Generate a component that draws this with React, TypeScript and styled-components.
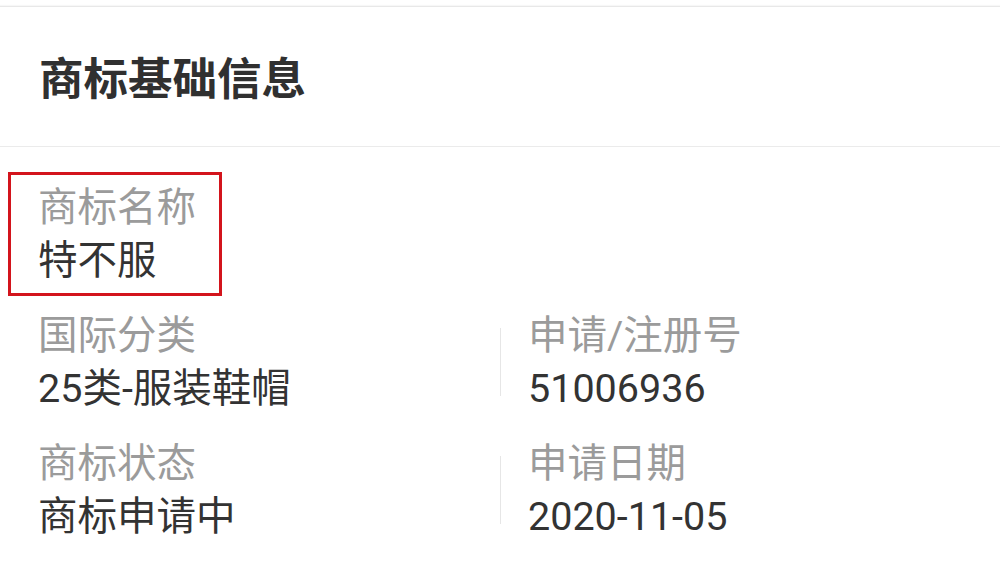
import React from "react";
import styled, { createGlobalStyle } from "styled-components";

const Global = createGlobalStyle`
  html, body { margin: 0; padding: 0; background: #ffffff; }
  body { font-family: Roboto, "Noto Sans CJK SC", sans-serif; }
`;

const Page = styled.div`
  width: 1000px;
  height: 571px;
  overflow: hidden;
  background: #ffffff;
  padding-top: 6px;
  box-sizing: border-box;
`;

const Card = styled.section`
  border-top: 1px solid #e8e8e8;
  box-shadow: 0 -1px 1px rgba(0, 0, 0, 0.03);
`;

const Header = styled.header`
  height: 139px;
  display: flex;
  align-items: center;
  padding-left: 39px;
  border-bottom: 1px solid #ebebeb;
`;

const Title = styled.h2`
  margin: 0;
  font-family: "Noto Sans CJK SC", sans-serif;
  font-size: 44.5px;
  font-weight: 700;
  color: #303030;
  line-height: 1;
`;

const Grid = styled.div`
  display: grid;
  grid-template-columns: 492px 1fr;
  row-gap: 4px;
  padding: 25px 0 0 8px;
`;

const Cell = styled.div<{ $divider?: boolean }>`
  position: relative;
  display: flex;
  align-items: flex-start;
  ${(p) =>
    p.$divider &&
    `
    &::before {
      content: "";
      position: absolute;
      left: 0;
      top: 28px;
      bottom: 28px;
      width: 1px;
      background: #e6e6e6;
    }
  `}
`;

const Field = styled.div<{ $highlight?: boolean; $indent?: number }>`
  box-sizing: border-box;
  width: fit-content;
  padding: 6px 23px 6px ${(p) => p.$indent ?? 27}px;
  border: 3px solid ${(p) => (p.$highlight ? "#d3141c" : "transparent")};
  display: flex;
  flex-direction: column;
`;

const Label = styled.div`
  font-size: 39.5px;
  line-height: 53px;
  color: #9b9b9b;
  white-space: nowrap;
`;

const Value = styled.div`
  font-size: 39.5px;
  line-height: 53px;
  color: #333333;
  white-space: nowrap;
`;

type Item = { label: string; value: string; highlight?: boolean };

const rows: [Item, Item | null][] = [
  [{ label: "商标名称", value: "特不服", highlight: true }, null],
  [
    { label: "国际分类", value: "25类-服装鞋帽" },
    { label: "申请/注册号", value: "51006936" },
  ],
  [
    { label: "商标状态", value: "商标申请中" },
    { label: "申请日期", value: "2020-11-05" },
  ],
];

export default function App() {
  return (
    <>
      <Global />
      <Page>
        <Card>
          <Header>
            <Title>商标基础信息</Title>
          </Header>
          <Grid>
            {rows.map(([left, right], i) => (
              <React.Fragment key={i}>
                <Cell>
                  <Field $highlight={left.highlight}>
                    <Label>{left.label}</Label>
                    <Value>{left.value}</Value>
                  </Field>
                </Cell>
                <Cell $divider={!!right}>
                  {right && (
                    <Field $indent={25}>
                      <Label>{right.label}</Label>
                      <Value>{right.value}</Value>
                    </Field>
                  )}
                </Cell>
              </React.Fragment>
            ))}
          </Grid>
        </Card>
      </Page>
    </>
  );
}
